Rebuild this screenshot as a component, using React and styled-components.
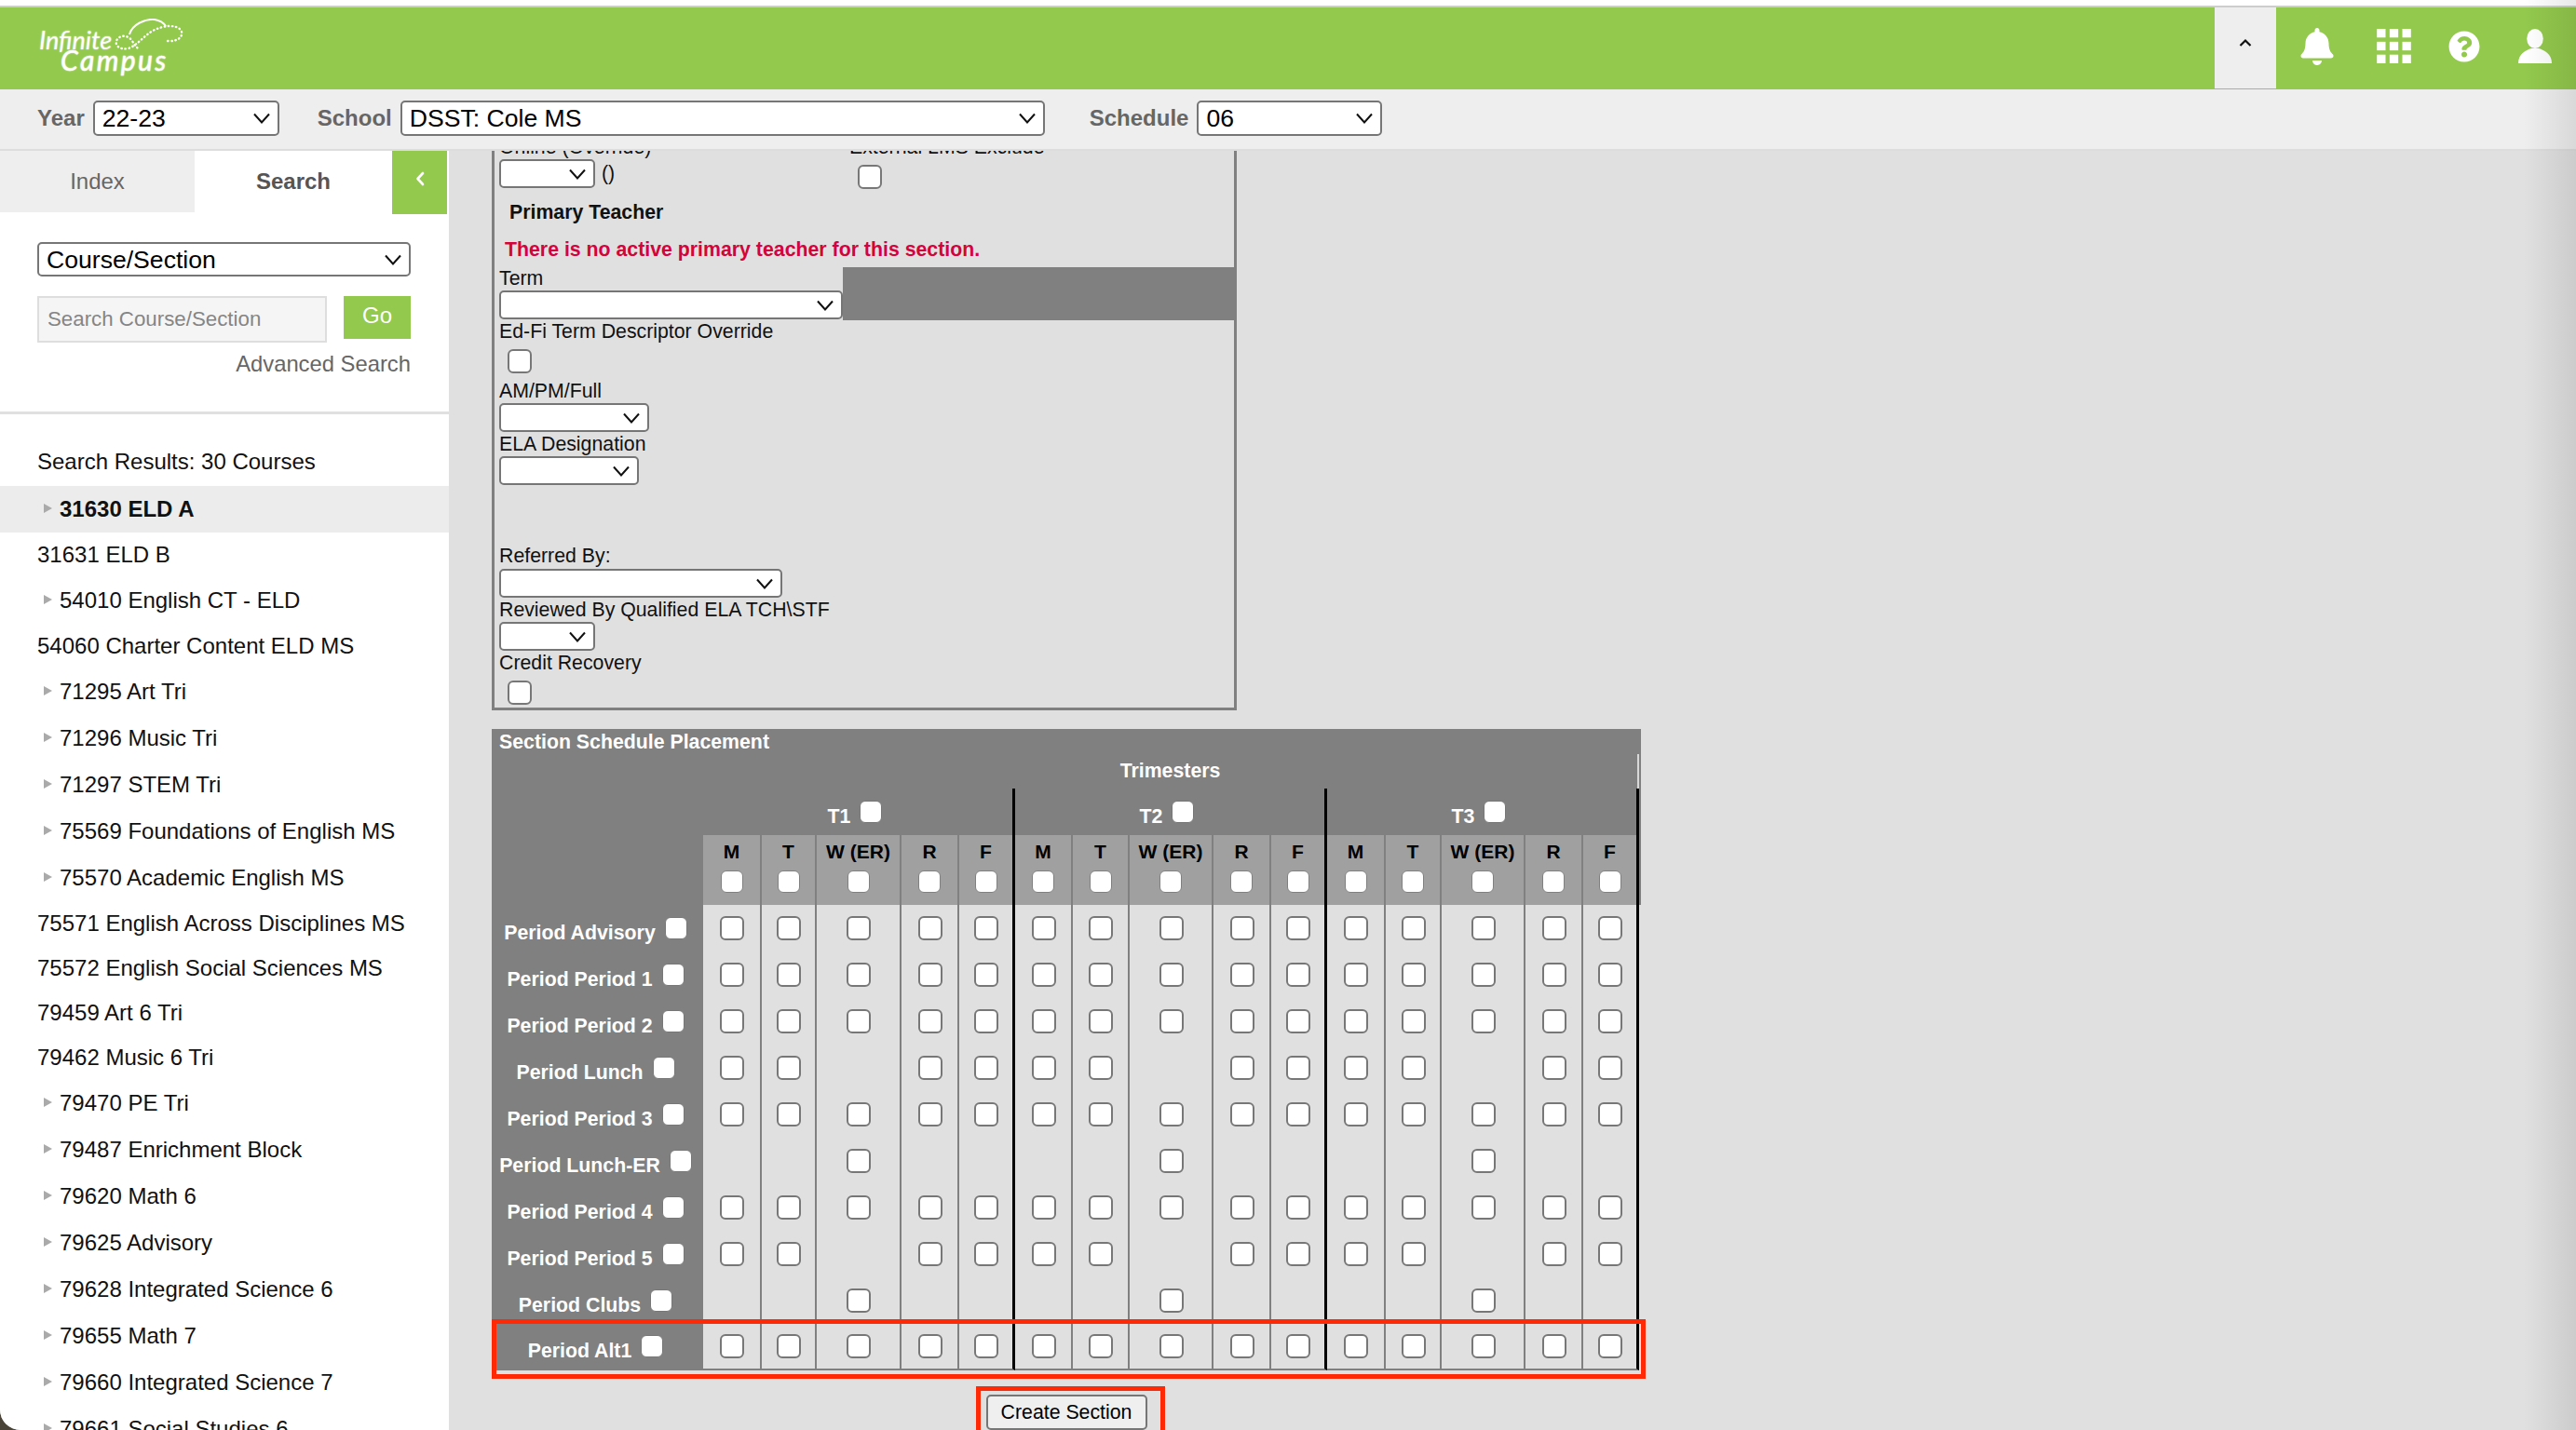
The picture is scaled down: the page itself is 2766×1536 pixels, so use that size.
import React from 'react'
import styled, { createGlobalStyle } from 'styled-components'
import { FaBell, FaQuestionCircle } from 'react-icons/fa'

const GREEN = '#93c94d'
const FONT = '"Liberation Sans", Arial, sans-serif'
const CHEVRON =
  "url(\"data:image/svg+xml,%3Csvg xmlns='http://www.w3.org/2000/svg' width='18' height='12' viewBox='0 0 18 12'%3E%3Cpath d='M1 1.5l8 9 8-9' fill='none' stroke='%23111' stroke-width='2'/%3E%3C/svg%3E\")"

const GlobalStyle = createGlobalStyle`
  html, body {
    margin: 0;
    padding: 0;
    background: #4a4438;
    font-family: ${FONT};
  }
  * { box-sizing: border-box; }
`

const Page = styled.div`
  position: relative;
  width: 2766px;
  height: 1536px;
  overflow: hidden;
  display: flex;
  flex-direction: column;
  background: #e0e0e0;
  border-bottom-left-radius: 22px;
`

const EdgeShade = styled.div`
  position: absolute;
  top: 0;
  right: 0;
  bottom: 0;
  width: 56px;
  pointer-events: none;
  background: linear-gradient(to right, rgba(0, 0, 0, 0), rgba(0, 0, 0, 0.09));
`

const TopStrip = styled.div`
  height: 8px;
  flex: none;
  background: #fff;
  border-bottom: 2px solid #cdcdcd;
`

const Header = styled.header`
  height: 88px;
  flex: none;
  display: flex;
  align-items: stretch;
  justify-content: space-between;
  background: ${GREEN};
  padding-right: 6px;
`

const Logo = styled.div`
  position: relative;
  width: 190px;
  margin-left: 20px;
  display: flex;
  flex-direction: column;
  color: #fff;
  font-family: Lato, sans-serif;
  font-style: italic;
  text-shadow: 0 0 2px rgba(255, 255, 255, 0.7);
`

const LogoTop = styled.span`
  font-size: 27px;
  line-height: 22px;
  margin: 24px 0 0 22px;
`

const LogoBottom = styled.span`
  font-size: 30px;
  line-height: 20px;
  letter-spacing: 2.4px;
  -webkit-text-stroke: 0.4px #fff;
  margin: 0 0 0 45px;
`

const LogoLoop = styled.svg`
  position: absolute;
  left: 100px;
  top: 12px;
`

const HeaderRight = styled.div`
  display: flex;
  align-items: stretch;
`

const CollapseTop = styled.button`
  width: 66px;
  height: 87px;
  border: 0;
  padding: 0;
  background: #eeeeee;
  display: flex;
  align-items: center;
  justify-content: center;
  padding-bottom: 13px;
`

const IconSlot = styled.div`
  width: ${({ $w }) => $w}px;
  display: flex;
  align-items: center;
  justify-content: center;
  color: #fff;
  padding-bottom: 5px;
`

const ContextBar = styled.div`
  height: 66px;
  flex: none;
  display: flex;
  align-items: center;
  padding: 0 0 3px 40px;
  background: #eeeeee;
  border-bottom: 2px solid #dddddd;
`

const ContextLabel = styled.label`
  font-size: 24px;
  font-weight: bold;
  color: #666;
  margin: 0 9px 0 ${({ $ml }) => $ml || 0}px;
`

const Select = styled.select`
  appearance: none;
  display: block;
  width: ${({ $w }) => $w}px;
  height: ${({ $h }) => $h || 31}px;
  padding: 0 0 0 8px;
  font-family: ${FONT};
  font-size: ${({ $fs }) => $fs || 21.3}px;
  color: #000;
  background: #fff ${CHEVRON} no-repeat right 8px center;
  border: 2px solid #767676;
  border-radius: 5px;
`

const Body = styled.div`
  flex: 1;
  min-height: 0;
  display: flex;
`

const Sidebar = styled.aside`
  width: 482px;
  flex: none;
  background: #fff;
  overflow: hidden;
`

const TabRow = styled.div`
  display: flex;
  height: 68px;
  margin-right: 2px;
`

const Tab = styled.div`
  width: ${({ $w }) => $w}px;
  height: 66px;
  display: flex;
  align-items: center;
  justify-content: center;
  font-size: 24px;
  color: ${({ $active }) => ($active ? '#555' : '#666')};
  font-weight: ${({ $active }) => ($active ? 'bold' : 'normal')};
  background: ${({ $active }) => ($active ? '#fff' : '#eeeeee')};
`

const TabCollapse = styled.button`
  flex: 1;
  border: 0;
  padding: 0 0 9px;
  background: ${GREEN};
  display: flex;
  align-items: center;
  justify-content: center;
`

const SearchBox = styled.div`
  padding: 30px 41px 0 40px;
  height: 215px;
  border-bottom: 3px solid #e0e0e0;
`

const SearchRow = styled.div`
  display: flex;
  justify-content: space-between;
  align-items: flex-start;
  margin-top: 21px;
`

const SearchInput = styled.input`
  width: 311px;
  height: 50px;
  padding: 0 9px;
  font-family: ${FONT};
  font-size: 22.3px;
  background: #f5f5f5;
  border: 2px solid #dedede;
  &::placeholder { color: #858585; opacity: 1; }
`

const GoButton = styled.button`
  width: 72px;
  height: 46px;
  border: 0;
  padding: 0 0 4px;
  background: ${GREEN};
  color: #fff;
  font-family: ${FONT};
  font-size: 24px;
`

const AdvancedLink = styled.div`
  margin-top: 9px;
  text-align: right;
  font-size: 23.8px;
  line-height: 28px;
  color: #666;
`

const ResultsTitle = styled.div`
  height: 77px;
  padding: 37px 0 0 40px;
  font-size: 24px;
  line-height: 28px;
  color: #111;
`

const CourseRow = styled.div`
  height: ${({ $arrow }) => ($arrow ? 50 : 48)}px;
  display: flex;
  align-items: center;
  gap: 8px;
  padding-left: ${({ $arrow }) => ($arrow ? 47 : 40)}px;
  font-size: 24px;
  color: #111;
  white-space: nowrap;
  font-weight: ${({ $selected }) => ($selected ? 'bold' : 'normal')};
  background: ${({ $selected }) => ($selected ? '#ececec' : 'transparent')};
`

const Arrow = styled.i`
  width: 0;
  height: 0;
  margin-bottom: 3px;
  border-style: solid;
  border-width: 5px 0 5px 9px;
  border-color: transparent transparent transparent #aaa;
`

const Main = styled.main`
  flex: 1;
  min-width: 0;
  overflow: hidden;
  padding-left: 46px;
`

const FormPanel = styled.section`
  width: 800px;
  height: 620px;
  margin-top: -19px;
  border: 3px solid #808080;
`

const FieldLine = styled.div`
  display: flex;
  padding-left: 5px;
`

const FieldColumn = styled.div`
  width: ${({ $w }) => $w}px;
  flex: none;
  padding-left: ${({ $pl }) => $pl || 0}px;
`

const FieldGroup = styled.div`
  padding-left: 5px;
`

const FieldLabel = styled.div`
  font-size: 21.3px;
  line-height: ${({ $h }) => $h || 25}px;
  color: #111;
  white-space: nowrap;
`

const InlineRow = styled.div`
  display: flex;
  align-items: center;
  gap: 7px;
  font-size: 21.3px;
  color: #111;
`

const PanelTitle = styled.div`
  margin: 12px 0 0 16px;
  font-size: 21.3px;
  line-height: 26px;
  font-weight: bold;
  color: #111;
`

const Warning = styled.div`
  margin: 14px 0 6px 11px;
  font-size: 21.3px;
  line-height: 26px;
  font-weight: bold;
  color: #d4033c;
`

const TermRow = styled.div`
  display: flex;
  height: 57px;
`

const GreyFill = styled.div`
  flex: 1;
  background: #808080;
`

const Box = styled.input.attrs({ type: 'checkbox' })`
  appearance: none;
  display: block;
  flex: none;
  margin: 0;
  width: 26px;
  height: 26px;
  background: #fff;
  border: 2.5px solid #777;
  border-radius: 6px;
`

const FieldBox = styled(Box)`
  margin: ${({ $m }) => $m || '6px 0 7px 9px'};
`

const HeadBox = styled(Box)`
  width: 24px;
  height: 24px;
  border: 1.5px solid #777;
`

const Spacer = styled.div`
  height: ${({ $h }) => $h}px;
`

const TableWrap = styled.div`
  position: relative;
  width: 1234px;
  margin-top: 20px;
`

const Table = styled.table`
  table-layout: fixed;
  width: 1234px;
  border-spacing: 0;
  border-collapse: separate;
`

const Col = styled.col`
  width: ${({ $w }) => $w}px;
`

const TitleCell = styled.th`
  height: 27px;
  padding: 2px 0 0 8px;
  text-align: left;
  font-size: 21.3px;
  color: #fff;
  background: #808080;
`

const TrimesterCell = styled.th`
  height: 37px;
  padding: 0 0 1px;
  font-size: 21.3px;
  color: #fff;
  background: #808080;
  border-right: 2px solid #d8d8d8;
`

const TermCell = styled.th`
  height: 50px;
  padding: 0;
  background: #808080;
  border-right: 3px solid #000;
`

const TermInner = styled.div`
  display: flex;
  justify-content: center;
  align-items: center;
  gap: 10px;
  color: #fff;
  font-size: 21.3px;
  padding-right: 6px;
`

const Shifted = styled.span`
  padding-top: 11px;
`

const BlankCell = styled.th`
  padding: 0;
  background: #808080;
`

const DayCell = styled.th`
  height: 75px;
  padding: 5px 0 0;
  vertical-align: top;
  font-size: 21px;
  line-height: 25px;
  color: #000;
  background: #a0a0a0;
  border-right: ${({ $end }) => ($end ? '3px solid #000' : '2px solid #808080')};
`

const DayBox = styled(HeadBox)`
  margin: 8px auto 0;
  border-color: #808080;
`

const RowHead = styled.th`
  height: 50px;
  padding: 0;
  background: #808080;
  color: #fff;
  font-size: 21.3px;
  ${({ $last }) => $last && 'border-bottom: 2px solid #808080;'}
`

const RowHeadInner = styled.div`
  display: flex;
  justify-content: center;
  align-items: center;
  gap: 10px;
  padding-right: 4px;
  white-space: nowrap;
`

const SlotCell = styled.td`
  padding: 0 0 0 1px;
  background: #e0e0e0;
  border-right: ${({ $end }) => ($end ? '3px solid #000' : '2px solid #808080')};
  ${({ $last }) => $last && 'border-bottom: 2px solid #808080;'}
`

const SlotBox = styled(Box)`
  margin: 0 auto;
`

const ButtonRow = styled.div`
  display: flex;
  justify-content: center;
  margin-top: 26px;
`

const ButtonHolder = styled.div`
  position: relative;
`

const CreateButton = styled.button`
  display: block;
  width: 173px;
  height: 38px;
  padding: 0;
  font-family: ${FONT};
  font-size: 21.3px;
  color: #000;
  background: #efefef;
  border: 2px solid #767676;
  border-radius: 5px;
`

const RedBox = styled.div`
  position: absolute;
  border: 5px solid #ff2a05;
  pointer-events: none;
`

const AltRowMark = styled(RedBox)`
  left: 0;
  top: 634px;
  width: 1239px;
  height: 64px;
`

const ButtonMark = styled(RedBox)`
  left: -11px;
  top: -9px;
  width: 203px;
  height: 70px;
`

const COURSES = [
  ['31630 ELD A', true, true],
  ['31631 ELD B', false],
  ['54010 English CT - ELD', true],
  ['54060 Charter Content ELD MS', false],
  ['71295 Art Tri', true],
  ['71296 Music Tri', true],
  ['71297 STEM Tri', true],
  ['75569 Foundations of English MS', true],
  ['75570 Academic English MS', true],
  ['75571 English Across Disciplines MS', false],
  ['75572 English Social Sciences MS', false],
  ['79459 Art 6 Tri', false],
  ['79462 Music 6 Tri', false],
  ['79470 PE Tri', true],
  ['79487 Enrichment Block', true],
  ['79620 Math 6', true],
  ['79625 Advisory', true],
  ['79628 Integrated Science 6', true],
  ['79655 Math 7', true],
  ['79660 Integrated Science 7', true],
  ['79661 Social Studies 6', true],
]

const COL_WIDTHS = [227, 63, 59, 91, 62, 60, 62, 61, 90, 62, 60, 63, 60, 90, 62, 60, 2]
const DAYS = ['M', 'T', 'W (ER)', 'R', 'F']
const TERMS = ['T1', 'T2', 'T3']

// which day columns have a box in each period row
const ALL = [0, 1, 2, 3, 4]
const NO_WED = [0, 1, 3, 4]
const WED = [2]
const PERIODS = [
  ['Period Advisory', ALL],
  ['Period Period 1', ALL],
  ['Period Period 2', ALL],
  ['Period Lunch', NO_WED],
  ['Period Period 3', ALL],
  ['Period Lunch-ER', WED],
  ['Period Period 4', ALL],
  ['Period Period 5', NO_WED],
  ['Period Clubs', WED],
  ['Period Alt1', ALL],
]

function BlankSelect(props) {
  return (
    <Select {...props}>
      <option></option>
    </Select>
  )
}

function LogoMark() {
  return (
    <Logo>
      <LogoTop>Infinite</LogoTop>
      <LogoBottom>Campus</LogoBottom>
      <LogoLoop width="84" height="50" viewBox="0 0 84 50">
        <path
          d="M60 24 C72 25 78 18 74 12 C68 6 56 7 44 13 C34 19 28 28 18 32 C8 34 2 28 6 22 C10 17 18 18 22 24 C24 28 26 30 30 34"
          fill="none"
          stroke="#fff"
          strokeWidth="2.4"
          strokeLinecap="round"
          strokeDasharray="0.5 3.6"
        />
        <path d="M19 17 C22 6 36 0 46 1 C52 2 56 5 58 8" fill="none" stroke="#fff" strokeWidth="2" />
      </LogoLoop>
    </Logo>
  )
}

function GridIcon() {
  const cells = []
  for (let r = 0; r < 3; r++) {
    for (let c = 0; c < 3; c++) {
      cells.push(<rect key={`${r}${c}`} x={c * 13.5} y={r * 13.7} width="9.2" height="9.2" />)
    }
  }
  return (
    <svg width="37" height="37" viewBox="0 0 36.2 36.6" fill="#fff">
      {cells}
    </svg>
  )
}

function PersonIcon() {
  return (
    <svg width="36" height="37" viewBox="0 0 36 37" fill="#fff">
      <ellipse cx="18" cy="10.5" rx="8.8" ry="10.5" />
      <path d="M0 37 C0 27 8 23 14 21 h8 C28 23 36 27 36 37 Z" />
    </svg>
  )
}

function ScheduleTable() {
  const periodRows = PERIODS.map(([name, boxes], rowIndex) => {
    const last = rowIndex === PERIODS.length - 1
    return (
      <tr key={name}>
        <RowHead $last={last}>
          <RowHeadInner>
            <Shifted>{name}</Shifted>
            <HeadBox />
          </RowHeadInner>
        </RowHead>
        {TERMS.map((term) =>
          DAYS.map((day, i) => (
            <SlotCell key={term + day} $end={i === 4} $last={last}>
              {boxes.includes(i) && <SlotBox />}
            </SlotCell>
          ))
        )}
      </tr>
    )
  })

  return (
    <Table>
      <colgroup>
        {COL_WIDTHS.map((w, i) => (
          <Col key={i} $w={w} />
        ))}
      </colgroup>
      <thead>
        <tr>
          <TitleCell colSpan={17}>Section Schedule Placement</TitleCell>
        </tr>
        <tr>
          <BlankCell />
          <TrimesterCell colSpan={15}>Trimesters</TrimesterCell>
          <BlankCell />
        </tr>
        <tr>
          <BlankCell />
          {TERMS.map((term) => (
            <TermCell key={term} colSpan={5}>
              <TermInner>
                <Shifted>{term}</Shifted>
                <HeadBox />
              </TermInner>
            </TermCell>
          ))}
          <BlankCell />
        </tr>
        <tr>
          <BlankCell />
          {TERMS.map((term) =>
            DAYS.map((day, i) => (
              <DayCell key={term + day} $end={i === 4}>
                {day}
                <DayBox />
              </DayCell>
            ))
          )}
          <BlankCell />
        </tr>
      </thead>
      <tbody>{periodRows}</tbody>
    </Table>
  )
}

export default function App() {
  return (
    <Page>
      <GlobalStyle />
      <TopStrip />
      <Header>
        <LogoMark />
        <HeaderRight>
          <CollapseTop>
            <svg width="14" height="9" viewBox="0 0 14 9">
              <path d="M1.5 8 L7 2.5 L12.5 8" fill="none" stroke="#111" strokeWidth="2.2" />
            </svg>
          </CollapseTop>
          <IconSlot $w={88}>
            <FaBell size={40} />
          </IconSlot>
          <IconSlot $w={76}>
            <GridIcon />
          </IconSlot>
          <IconSlot $w={76}>
            <FaQuestionCircle size={34} />
          </IconSlot>
          <IconSlot $w={76}>
            <PersonIcon />
          </IconSlot>
        </HeaderRight>
      </Header>

      <ContextBar>
        <ContextLabel>Year</ContextLabel>
        <Select $w={200} $h={38} $fs={26.6} defaultValue="22-23">
          <option>22-23</option>
        </Select>
        <ContextLabel $ml={41}>School</ContextLabel>
        <Select $w={692} $h={38} $fs={26.6} defaultValue="DSST: Cole MS">
          <option>DSST: Cole MS</option>
        </Select>
        <ContextLabel $ml={48}>Schedule</ContextLabel>
        <Select $w={199} $h={38} $fs={26.6} defaultValue="06">
          <option>06</option>
        </Select>
      </ContextBar>

      <Body>
        <Sidebar>
          <TabRow>
            <Tab $w={209}>Index</Tab>
            <Tab $w={212} $active>
              Search
            </Tab>
            <TabCollapse>
              <svg width="10" height="16" viewBox="0 0 10 16">
                <path
                  d="M8 2 L2.5 8 L8 14"
                  fill="none"
                  stroke="#fff"
                  strokeWidth="2.6"
                  strokeLinecap="round"
                  strokeLinejoin="round"
                />
              </svg>
            </TabCollapse>
          </TabRow>
          <SearchBox>
            <Select $w={401} $h={37} $fs={26.6} defaultValue="Course/Section">
              <option>Course/Section</option>
            </Select>
            <SearchRow>
              <SearchInput placeholder="Search Course/Section" />
              <GoButton>Go</GoButton>
            </SearchRow>
            <AdvancedLink>Advanced Search</AdvancedLink>
          </SearchBox>
          <ResultsTitle>Search Results: 30 Courses</ResultsTitle>
          {COURSES.map(([name, arrow, selected]) => (
            <CourseRow key={name} $arrow={arrow} $selected={selected}>
              {arrow && <Arrow />}
              {name}
            </CourseRow>
          ))}
        </Sidebar>

        <Main>
          <FormPanel>
            <FieldLine>
              <FieldColumn $w={376}>
                <FieldLabel>Online (Override)</FieldLabel>
                <InlineRow>
                  <BlankSelect $w={103} />
                  ()
                </InlineRow>
              </FieldColumn>
              <FieldColumn $w={400}>
                <FieldLabel>External LMS Exclude</FieldLabel>
                <FieldBox $m="6px 0 0 9px" />
              </FieldColumn>
            </FieldLine>
            <PanelTitle>Primary Teacher</PanelTitle>
            <Warning>There is no active primary teacher for this section.</Warning>
            <TermRow>
              <FieldColumn $w={374} $pl={5}>
                <FieldLabel>Term</FieldLabel>
                <BlankSelect $w={369} />
              </FieldColumn>
              <GreyFill />
            </TermRow>
            <FieldGroup>
              <FieldLabel>Ed-Fi Term Descriptor Override</FieldLabel>
              <FieldBox />
              <FieldLabel>AM/PM/Full</FieldLabel>
              <BlankSelect $w={161} />
              <FieldLabel $h={26}>ELA Designation</FieldLabel>
              <BlankSelect $w={150} />
              <Spacer $h={63} />
              <FieldLabel $h={27}>Referred By:</FieldLabel>
              <BlankSelect $w={304} />
              <FieldLabel $h={26}>Reviewed By Qualified ELA TCH\STF</FieldLabel>
              <BlankSelect $w={103} />
              <FieldLabel $h={26}>Credit Recovery</FieldLabel>
              <FieldBox />
            </FieldGroup>
          </FormPanel>

          <TableWrap>
            <ScheduleTable />
            <AltRowMark />
            <ButtonRow>
              <ButtonHolder>
                <CreateButton>Create Section</CreateButton>
                <ButtonMark />
              </ButtonHolder>
            </ButtonRow>
          </TableWrap>
        </Main>
      </Body>
      <EdgeShade />
    </Page>
  )
}
